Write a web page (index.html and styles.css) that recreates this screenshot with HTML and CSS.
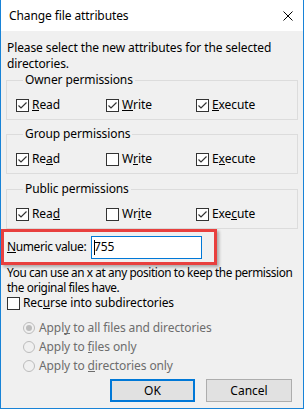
FILE: index.html
```html
<!doctype html>
<html lang="en">
  <head>
    <meta charset="UTF-8" />
    <title>Change file attributes</title>
    <link rel="stylesheet" href="styles.css">
  </head>
  <body>
    <div class="window">
      <div class="titlebar">
        <span class="title">Change file attributes</span>
        <svg class="close" viewBox="0 0 10 10" width="10" height="10">
          <path d="M0.5 0.5L9.5 9.5M9.5 0.5L0.5 9.5" stroke="#000" stroke-width="1" fill="none"></path>
        </svg>
      </div>

      <div class="content">
        <p class="intro">Please select the new attributes for the selected directories.</p>

        <fieldset class="group">
          <legend>Owner permissions</legend>
          <div class="perms">
            <label class="check"><span class="box on"></span><span><span class="key">R</span>ead</span></label>
            <label class="check"><span class="box on"></span><span><span class="key">W</span>rite</span></label>
            <label class="check"><span class="box on"></span><span><span class="key">E</span>xecute</span></label>
          </div>
        </fieldset>

        <fieldset class="group mid">
          <legend>Group permissions</legend>
          <div class="perms">
            <label class="check"><span class="box on"></span><span>Re<span class="key">a</span>d</span></label>
            <label class="check"><span class="box"></span><span>W<span class="key">r</span>ite</span></label>
            <label class="check"><span class="box on"></span><span>E<span class="key">x</span>ecute</span></label>
          </div>
        </fieldset>

        <fieldset class="group last">
          <legend>Public permissions</legend>
          <div class="perms">
            <label class="check"><span class="box on"></span><span>Rea<span class="key">d</span></span></label>
            <label class="check"><span class="box"></span><span>Wr<span class="key">i</span>te</span></label>
            <label class="check"><span class="box on"></span><span>Exe<span class="key">c</span>ute</span></label>
          </div>
        </fieldset>

        <div class="highlight">
          <label class="numeric-label"><span class="key">N</span>umeric value:</label>
          <div class="numeric-input"><span class="caret"></span>755</div>
        </div>

        <p class="hint">You can use an x at any position to keep the permission<br>the original files have.</p>

        <label class="check recurse"><span class="box"></span><span>Rec<span class="key">u</span>rse into subdirectories</span></label>

        <div class="radios">
          <label class="radio"><span class="dot on"></span><span>Appl<span class="key">y</span> to all files and directories</span></label>
          <label class="radio"><span class="dot"></span><span>Apply to <span class="key">f</span>iles only</span></label>
          <label class="radio"><span class="dot"></span><span>Apply to <span class="key">d</span>irectories only</span></label>
        </div>

        <div class="buttons">
          <button class="btn default">OK</button>
          <button class="btn">Cancel</button>
        </div>
      </div>
    </div>
  </body>
</html>
```

FILE: styles.css
```css
* {
  margin: 0;
  padding: 0;
  box-sizing: border-box;
}

body {
  font-family: "Noto Sans", "Open Sans", sans-serif;
  font-size: 12px;
  line-height: 16px;
  letter-spacing: -0.1px;
  color: #000;
  background: #fff;
}

/* access key letter */
.key {
  display: inline-block;
  line-height: 11px;
  border-bottom: 1px solid currentColor;
}

.window {
  width: 304px;
  height: 409px;
  border: 1px solid #1883d7;
  border-top: none;
  display: flex;
  flex-direction: column;
  background: #f0f0f0;
}

.titlebar {
  height: 31px;
  background: #fff;
  display: flex;
  align-items: center;
  justify-content: space-between;
  padding: 0 10px 0 8px;
}

.content {
  flex: 1;
  padding: 9px 5px 0 5px;
}

.intro {
  padding-left: 1px;
}

.group {
  border: 1px solid #dcdcdc;
  padding: 9px 9px 6px;
  margin-bottom: 6px;
  min-width: 0;
}

.group.mid {
  margin-bottom: 7px;
}

.group.last {
  margin-bottom: 0;
}

.group legend {
  margin-left: 7px;
  padding: 0 2px;
  line-height: 16px;
}

.perms {
  display: grid;
  grid-template-columns: 90px 90px 90px;
  height: 16px;
}

.check {
  display: flex;
  align-items: center;
  gap: 3px;
  white-space: nowrap;
}

.box {
  width: 13px;
  height: 13px;
  border: 1px solid #333;
  background: #fff;
  flex: none;
}

.box.on {
  background: #fff url("data:image/svg+xml,%3Csvg xmlns='http://www.w3.org/2000/svg' width='11' height='11'%3E%3Cpath d='M1.5 5.5L4 8L9.5 2.5' stroke='%23333' stroke-width='1.2' fill='none'/%3E%3C/svg%3E") no-repeat center;
}

.highlight {
  margin-left: -5px;
  width: 216px;
  height: 36px;
  border: 3px solid #e8403e;
  box-shadow: 2px 2px 3px rgba(0, 0, 0, 0.3);
  display: flex;
  align-items: center;
  padding-left: 3px;
}

.numeric-label {
  width: 84px;
  white-space: nowrap;
  letter-spacing: -0.4px;
}

.numeric-input {
  width: 111px;
  height: 23px;
  border: 1px solid #0078d7;
  background: #fff;
  display: flex;
  align-items: center;
  padding-left: 2px;
}

.caret {
  width: 1px;
  height: 15px;
  background: #000;
  margin-right: -1px;
}

.hint {
  padding-left: 1px;
  line-height: 15px;
  white-space: nowrap;
  font-size: 11.8px;
  letter-spacing: -0.4px;
}

.recurse {
  padding-left: 1px;
  height: 16px;
}

.radios {
  display: flex;
  flex-direction: column;
  padding-left: 17px;
  margin-top: 7px;
  color: #6d6d6d;
}

.radio {
  display: flex;
  align-items: center;
  gap: 4px;
  height: 19px;
  white-space: nowrap;
}

.dot {
  width: 12px;
  height: 12px;
  border-radius: 50%;
  border: 1px solid #bcbcbc;
  background: #f0f0f0;
  display: flex;
  align-items: center;
  justify-content: center;
  flex: none;
}

.dot.on::after {
  content: "";
  width: 6px;
  height: 6px;
  border-radius: 50%;
  background: #bcbcbc;
}

.buttons {
  display: flex;
  justify-content: flex-end;
  gap: 11px;
  margin-top: 4px;
  padding-right: 6px;
}

.btn {
  width: 86px;
  height: 23px;
  font-family: inherit;
  font-size: 12px;
  background: #e1e1e1;
  border: 1px solid #adadad;
  color: #000;
}

.btn.default {
  width: 85px;
  border: 2px solid #0078d7;
}
```
